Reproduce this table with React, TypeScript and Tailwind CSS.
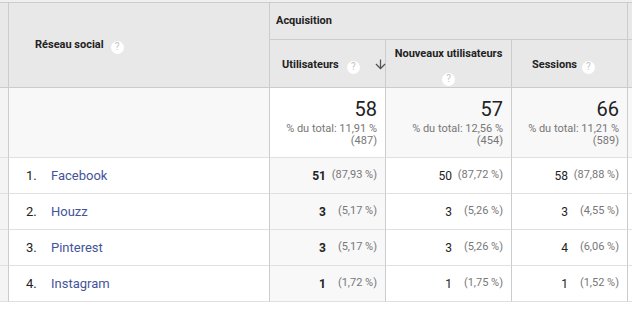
import React from 'react';

interface Row {
  rank: number;
  name: string;
  users: number;
  usersPct: string;
  newUsers: number;
  newUsersPct: string;
  sessions: number;
  sessionsPct: string;
}

const rows: Row[] = [
  { rank: 1, name: 'Facebook', users: 51, usersPct: '(87,93 %)', newUsers: 50, newUsersPct: '(87,72 %)', sessions: 58, sessionsPct: '(87,88 %)' },
  { rank: 2, name: 'Houzz', users: 3, usersPct: '(5,17 %)', newUsers: 3, newUsersPct: '(5,26 %)', sessions: 3, sessionsPct: '(4,55 %)' },
  { rank: 3, name: 'Pinterest', users: 3, usersPct: '(5,17 %)', newUsers: 3, newUsersPct: '(5,26 %)', sessions: 4, sessionsPct: '(6,06 %)' },
  { rank: 4, name: 'Instagram', users: 1, usersPct: '(1,72 %)', newUsers: 1, newUsersPct: '(1,75 %)', sessions: 1, sessionsPct: '(1,52 %)' },
];

const totals = [
  { value: 58, pct: '% du total: 11,91 %', total: '(487)' },
  { value: 57, pct: '% du total: 12,56 %', total: '(454)' },
  { value: 66, pct: '% du total: 11,21 %', total: '(589)' },
];

const HelpIcon = () => (
  <span className="inline-flex w-[13px] h-[13px] rounded-full bg-white text-[#c2c2c2] text-[10px] leading-none items-center justify-center shrink-0">
    ?
  </span>
);

const SortArrow = () => (
  <svg width="15" height="15" viewBox="0 0 24 24" className="shrink-0">
    <path d="M20 12l-1.41-1.41L13 16.17V4h-2v12.17l-5.58-5.59L4 12l8 8 8-8z" fill="#555" />
  </svg>
);

const ValueCell = ({ value, pct, bold, shaded }: { value: number; pct: string; bold?: boolean; shaded?: boolean }) => (
  <div
    className={`flex items-center justify-end pr-[8px] border-r border-b border-r-[#cccccc] border-b-[#e0e0e0] ${
      shaded ? 'bg-[#f8f8f8]' : 'bg-white'
    }`}
  >
    <span className={`text-[12px] text-[#222] ${bold ? 'font-bold' : ''}`}>{value}</span>
    <span className="inline-block w-[46px] ml-[5px] text-right text-[11px] text-[#777]">{pct}</span>
  </div>
);

export default function App() {
  return (
    <div className="w-[632px] h-[311px] bg-white overflow-hidden font-['Roboto',sans-serif]">
      <div className="h-[2px] bg-[#efefef]" />
      <div className="grid grid-cols-[9px_261px_116px_126px_116px_1fr] grid-rows-[37px_48px_70px_36px_36px_36px_36px] border-t border-[#cccccc]">
        {/* header */}
        <div className="row-span-2 bg-[#e8e8e8] border-r border-b border-[#cccccc]" />
        <div className="row-span-2 bg-[#e8e8e8] border-r border-b border-[#cccccc] flex items-center pl-[26px]">
          <span className="text-[11px] font-bold text-[#222]">Réseau social</span>
          <span className="ml-[7px]">
            <HelpIcon />
          </span>
        </div>
        <div className="col-span-3 bg-[#e8e8e8] border-r border-b border-[#cccccc] flex items-center pl-[6px]">
          <span className="text-[11px] font-bold text-[#222]">Acquisition</span>
        </div>
        <div className="bg-[#e8e8e8] border-b border-[#cccccc]" />

        <div className="bg-[#e8e8e8] border-r border-b border-[#cccccc] flex items-center pl-[12px] pt-[3px]">
          <span className="text-[11px] font-bold text-[#222]">Utilisateurs</span>
          <span className="ml-[8px]">
            <HelpIcon />
          </span>
          <span className="ml-[13px] -mt-[2px]">
            <SortArrow />
          </span>
        </div>
        <div className="bg-[#e8e8e8] border-r border-b border-[#cccccc] flex flex-col items-center pt-[7px]">
          <span className="text-[11px] leading-[13px] font-bold text-[#222]">Nouveaux utilisateurs</span>
          <span className="mt-[5px]">
            <HelpIcon />
          </span>
        </div>
        <div className="bg-[#e8e8e8] border-r border-b border-[#cccccc] flex items-center pl-[20px] pt-[3px]">
          <span className="text-[11px] font-bold text-[#222]">Sessions</span>
          <span className="ml-[5px]">
            <HelpIcon />
          </span>
        </div>
        <div className="bg-[#e8e8e8] border-b border-[#cccccc]" />

        {/* totals */}
        <div className="bg-[#f4f4f4] border-r border-b border-r-[#cccccc] border-b-[#e0e0e0]" />
        <div className="bg-[#f8f8f8] border-r border-b border-r-[#cccccc] border-b-[#e0e0e0]" />
        {totals.map((t, i) => (
          <div
            key={t.total}
            className={`flex flex-col items-end pr-[8px] pt-[9px] border-r border-b border-r-[#cccccc] border-b-[#e0e0e0] ${
              i === 0 ? 'bg-white' : 'bg-[#f8f8f8]'
            }`}
          >
            <span className="text-[20px] leading-[24px] text-[#222]">{t.value}</span>
            <span className="mt-[2px] text-[11px] leading-[12px] text-[#777]">{t.pct}</span>
            <span className="text-[11px] leading-[12px] text-[#777]">{t.total}</span>
          </div>
        ))}
        <div className="bg-[#f8f8f8] border-b border-[#e0e0e0]" />

        {/* rows */}
        {rows.map((r) => (
          <React.Fragment key={r.name}>
            <div className="bg-[#f4f4f4] border-r border-b border-r-[#cccccc] border-b-[#e0e0e0]" />
            <div className="bg-white flex items-center pl-[17px] border-r border-b border-r-[#cccccc] border-b-[#e0e0e0]">
              <span className="w-[25px] text-[13px] text-[#222]">{r.rank}.</span>
              <span className="text-[13px] text-[#44549b]">{r.name}</span>
            </div>
            <ValueCell value={r.users} pct={r.usersPct} bold shaded />
            <ValueCell value={r.newUsers} pct={r.newUsersPct} />
            <ValueCell value={r.sessions} pct={r.sessionsPct} />
            <div className="bg-white border-b border-[#e0e0e0]" />
          </React.Fragment>
        ))}
      </div>
    </div>
  );
}
